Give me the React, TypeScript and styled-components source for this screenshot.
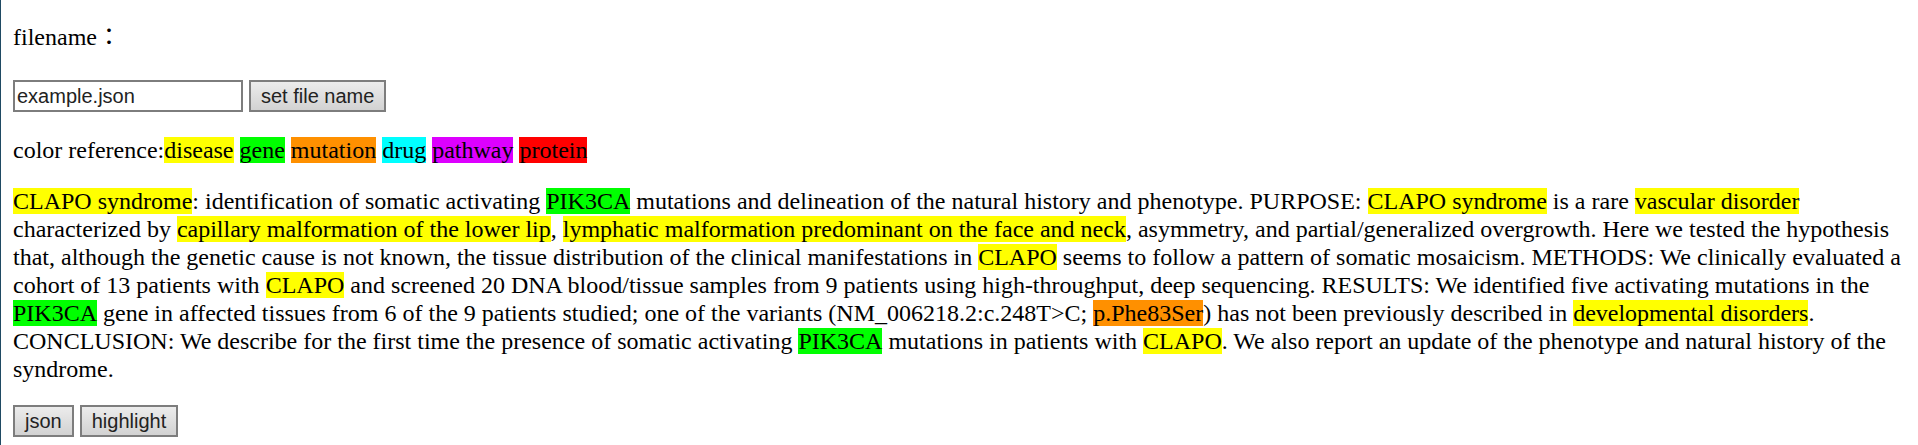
import React, { useState } from "react";
import styled, { createGlobalStyle } from "styled-components";

const GlobalStyle = createGlobalStyle`
  body {
    margin: 0;
    background: #fff;
    color: #000;
  }
`;

const Page = styled.main`
  min-height: 100vh;
  box-sizing: border-box;
  padding: 23px 12px 8px 12px;
  border-left: 1px solid #1f4a63;
  font: 24px/28px "Liberation Serif", "Noto Sans CJK TC", serif;
`;

const Label = styled.label`
  display: block;
`;

const Row = styled.div`
  display: flex;
  align-items: center;
  gap: 6px;
`;

const FileRow = styled(Row)`
  margin-top: 29px;
`;

const ActionRow = styled(Row)`
  margin-top: 22px;
`;

const TextInput = styled.input`
  box-sizing: border-box;
  width: 230px;
  height: 32px;
  padding: 2px;
  border: 2px solid #7d7d7d;
  color: #222;
  font: 20px "Liberation Sans", sans-serif;
`;

const Button = styled.button`
  box-sizing: border-box;
  height: 32px;
  padding: 0 10px;
  border: 2px solid #7d7d7d;
  background: linear-gradient(#ececec, #d2d2d2);
  color: #222;
  font: 20px "Liberation Sans", sans-serif;
`;

const Legend = styled.p`
  margin: 24px 0 0;
`;

const Abstract = styled.p`
  margin: 23px 0 0;
`;

const colors = {
  disease: "#ffff00",
  gene: "#00ff00",
  mutation: "#ff9000",
  drug: "#00ffff",
  pathway: "#dd00ff",
  protein: "#ff0000",
};
type Kind = keyof typeof colors;

const Mark = styled.mark<{ $kind: Kind }>`
  background: ${({ $kind }) => colors[$kind]};
  color: #000;
  unicode-bidi: isolate;
`;

const kinds = Object.keys(colors) as Kind[];

export default function App() {
  const [name, setName] = useState("example.json");
  return (
    <>
      <GlobalStyle />
      <Page>
        <Label htmlFor="filename">filename：</Label>
        <FileRow>
          <TextInput id="filename" value={name} onChange={(e) => setName(e.target.value)} />
          <Button type="button">set file name</Button>
        </FileRow>
        <Legend>
          color reference:
          {kinds.map((kind) => (
            <React.Fragment key={kind}>
              <Mark $kind={kind}>{kind}</Mark>{" "}
            </React.Fragment>
          ))}
        </Legend>
        <Abstract>
          <Mark $kind="disease">CLAPO syndrome</Mark>: identification of somatic activating{" "}
          <Mark $kind="gene">PIK3CA</Mark> mutations and delineation of the natural history and
          phenotype. PURPOSE: <Mark $kind="disease">CLAPO syndrome</Mark> is a rare{" "}
          <Mark $kind="disease">vascular disorder</Mark> characterized by{" "}
          <Mark $kind="disease">capillary malformation of the lower lip</Mark>,{" "}
          <Mark $kind="disease">lymphatic malformation predominant on the face and neck</Mark>,
          asymmetry, and partial/generalized overgrowth. Here we tested the hypothesis that,
          although the genetic cause is not known, the tissue distribution of the clinical
          manifestations in <Mark $kind="disease">CLAPO</Mark> seems to follow a pattern of somatic
          mosaicism. METHODS: We clinically evaluated a cohort of 13 patients with{" "}
          <Mark $kind="disease">CLAPO</Mark> and screened 20 DNA blood/tissue samples from 9
          patients using high-throughput, deep sequencing. RESULTS: We identified five activating
          mutations in the <Mark $kind="gene">PIK3CA</Mark> gene in affected tissues from 6 of the 9
          patients studied; one of the variants (NM_006218.2:c.248T&gt;C;{" "}
          <Mark $kind="mutation">p.Phe83Ser</Mark>) has not been previously described in{" "}
          <Mark $kind="disease">developmental disorders</Mark>. CONCLUSION: We describe for the
          first time the presence of somatic activating <Mark $kind="gene">PIK3CA</Mark> mutations
          in patients with <Mark $kind="disease">CLAPO</Mark>. We also report an update of the
          phenotype and natural history of the syndrome.
        </Abstract>
        <ActionRow>
          <Button type="button">json</Button>
          <Button type="button">highlight</Button>
        </ActionRow>
      </Page>
    </>
  );
}
